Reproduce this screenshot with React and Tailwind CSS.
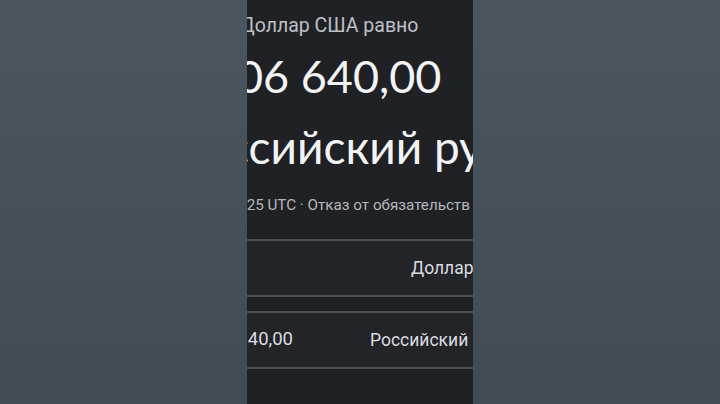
export default function App() {
  return (
    <div className="flex h-[404px] w-[720px] overflow-hidden bg-gradient-to-b from-[#4b5660] to-[#404b54]">
      <div className="w-[247px] shrink-0" />
      <div className="flex w-[226px] shrink-0 flex-col overflow-hidden bg-[#202124] font-['Roboto',sans-serif]">
        <div className="ml-[-7px] mt-[13px] whitespace-nowrap text-[19.5px] leading-[26px] text-[#bdc1c6]">Доллар США равно</div>
        <div className="ml-[-10px] mt-[13px] whitespace-nowrap font-['Lato',sans-serif] text-[45px] leading-[48px] text-[#f1f3f4]">06 640,00</div>
        <div className="ml-[-20px] mt-[23px] whitespace-nowrap font-['Lato',sans-serif] text-[46px] leading-[48px] text-[#f1f3f4]">ссийский рубль</div>
        <div className="ml-[-4px] mt-[24px] whitespace-nowrap text-[15.2px] leading-[20px] text-[#b4b8bc]">:25 UTC · Отказ от обязательств</div>
        <div className="mt-[24px] flex flex-col border-t-2 border-[#4a4d51]">
          <div className="flex h-[54px] items-center bg-[#222427]">
            <div className="w-[73px] shrink-0" />
            <div className="h-[30px] w-px bg-[#3c4043]" />
            <div className="ml-[91px] whitespace-nowrap text-[17.5px] text-[#dadce0]">Доллар США</div>
          </div>
          <div className="h-[18px] border-y-2 border-[#4a4d51] bg-[#1f2022]" />
          <div className="flex h-[56px] items-center border-b-2 border-[#4a4d51] bg-[#222427]">
            <div className="flex w-[73px] shrink-0 justify-end overflow-hidden pr-[27px]">
              <span className="whitespace-nowrap text-[18.5px] text-[#dadce0]">40,00</span>
            </div>
            <div className="h-[31px] w-px bg-[#3c4043]" />
            <div className="ml-[50px] whitespace-nowrap text-[17.5px] text-[#dadce0]">Российский рубль</div>
          </div>
        </div>
      </div>
      <div className="flex-1" />
    </div>
  );
}
